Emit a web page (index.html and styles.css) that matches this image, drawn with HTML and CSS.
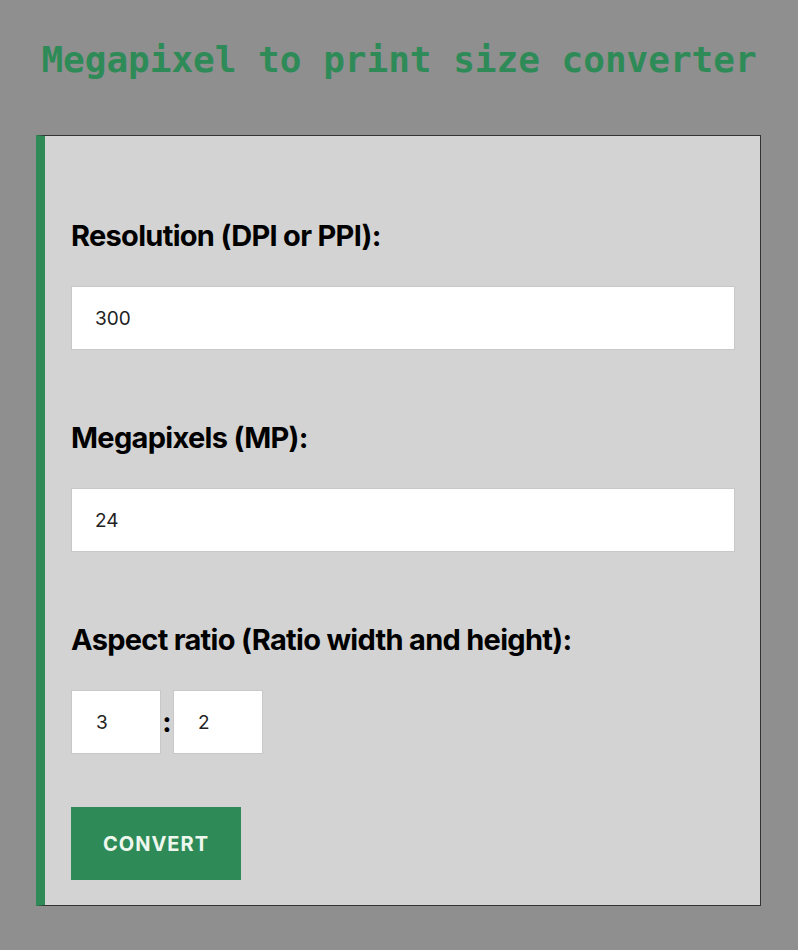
FILE: index.html
```html
<!DOCTYPE html>
<html>
<head>
  <meta charset="UTF-8">
  <meta name="viewport" content="width=device-width, initial-scale=1.0"/>
  <title>Megapixel to print size converter</title>
  <link rel="stylesheet" href="styles.css">
</head>
<body>
  <h1 class="title">Megapixel to print size converter</h1>
  <div class="card">
    <div class="field">
      <label for="dpi">Resolution (DPI or PPI):</label>
      <input id="dpi" type="text" value="300">
    </div>
    <div class="field">
      <label for="mp">Megapixels (MP):</label>
      <input id="mp" type="text" value="24">
    </div>
    <div class="field">
      <label for="rw">Aspect ratio (Ratio width and height):</label>
      <div class="ratio">
        <input id="rw" class="small" type="text" value="3">
        <span class="colon">:</span>
        <input id="rh" class="small" type="text" value="2">
      </div>
    </div>
    <button class="btn">CONVERT</button>
  </div>
</body>
</html>
```
FILE: styles.css
```css
body {
  margin: 0;
  background-color: #8f8f8f;
  font-family: Inter, "Liberation Sans", sans-serif;
}
.title {
  margin: 0;
  padding-top: 38px;
  height: 97px;
  box-sizing: border-box;
  text-align: center;
  font-family: "DejaVu Sans Mono", "Liberation Mono", monospace;
  font-size: 36px;
  font-weight: bold;
  color: #2e8b57;
  line-height: 44px;
}
.card {
  margin: 38px 37px 0 36px;
  background-color: #d3d3d3;
  border: 1px solid #333;
  border-left: 9px solid #2e8b57;
  padding: 84px 25px 25px 26px;
}
.field {
  margin-bottom: 72px;
}
div.field:last-of-type {
  margin-bottom: 53px;
}
.field label {
  display: block;
  font-size: 29px;
  font-weight: 700;
  letter-spacing: -0.7px;
  color: #000;
  line-height: 32px;
  margin-bottom: 34px;
}
.field input {
  display: block;
  box-sizing: border-box;
  width: 100%;
  height: 64px;
  border: 1px solid #c8c8c8;
  background: #fff;
  padding: 0 23px;
  font-family: Inter, "Liberation Sans", sans-serif;
  font-size: 19px;
  color: #222;
}
.ratio {
  display: flex;
  align-items: center;
}
.ratio .small {
  width: 90px;
  padding: 0 24px;
}
.colon {
  width: 12px;
  text-align: center;
  font-size: 28px;
  font-weight: 700;
}
.btn {
  display: block;
  width: 170px;
  height: 73px;
  border: none;
  background-color: #2e8b57;
  color: #eef7ee;
  font-family: Inter, "Liberation Sans", sans-serif;
  font-size: 20px;
  font-weight: 700;
  letter-spacing: 1px;
}
```
